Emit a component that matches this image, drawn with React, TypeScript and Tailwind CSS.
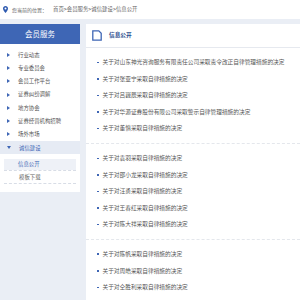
import { ReactNode } from "react";

const font = { fontFamily: '"Noto Sans CJK SC", "Noto Sans", sans-serif' };

const menu = ["行业动态", "专业委员会", "会员工作平台", "证券纠纷调解", "地方协会", "证券经营机构招聘", "场外市场"];

const groups = [
  [
    "关于对山东神光咨询服务有限责任公司采取责令改正自律管理措施的决定",
    "关于对张亚宁采取自律措施的决定",
    "关于对吕巍辰采取自律措施的决定",
    "关于对华源证券股份有限公司采取警示自律管理措施的决定",
    "关于对董慎采取自律措施的决定",
  ],
  [
    "关于对袁羽采取自律措施的决定",
    "关于对邵小龙采取自律措施的决定",
    "关于对汪勇采取自律措施的决定",
    "关于对王春红采取自律措施的决定",
    "关于对陈大祥采取自律措施的决定",
  ],
  ["关于对陈帆采取自律措施的决定", "关于对周皓采取自律措施的决定", "关于对仝胜利采取自律措施的决定"],
];

function Triangle({ down }: { down?: boolean }) {
  return down ? (
    <span className="h-0 w-0 border-x-[2px] border-t-[3px] border-x-transparent border-t-[#3e66b5]" />
  ) : (
    <span className="h-0 w-0 border-y-[2px] border-l-[3px] border-y-transparent border-l-[#3e66b5]" />
  );
}

function SideItem({ children, active }: { children: ReactNode; active?: boolean }) {
  return (
    <li
      className={`flex h-[13.3px] items-center gap-[6px] pl-[7px] text-[5.4px] ${
        active ? "bg-[#e6ebf4] text-[#3e66b5]" : "text-[#555]"
      }`}
    >
      <Triangle down={active} />
      <span className="ml-[2px]">{children}</span>
    </li>
  );
}

export default function App() {
  return (
    <div className="h-[300px] w-[300px] overflow-hidden bg-[#eaeef5]" style={font}>
      <div className="flex h-[19px] items-center gap-[4px] bg-white pl-[3px] text-[5px] text-[#666]">
        <svg width="5" height="7" viewBox="0 0 10 14">
          <path d="M5 0C2.2 0 0 2.2 0 5c0 3.6 5 9 5 9s5-5.4 5-9c0-2.8-2.2-5-5-5z" fill="#2f5bb0" />
          <circle cx="5" cy="5" r="2" fill="#fff" />
        </svg>
        <span>您当前的位置：</span>
        <span className="ml-[2px] text-[5.4px]">首页&gt;会员服务&gt;诚信建设&gt;信息公开</span>
      </div>

      <div className="flex gap-[6px] pt-[5px]">
        <div className="w-[80px] shrink-0 self-start bg-white pb-[8px]">
          <div className="flex h-[20px] items-center justify-center bg-[#3e66b5] text-[7.5px] text-white">会员服务</div>
          <ul className="pt-[4px]">
            {menu.map((m) => (
              <SideItem key={m}>{m}</SideItem>
            ))}
            <SideItem active>诚信建设</SideItem>
          </ul>
          <ul className="mx-[4px] mt-[4px] text-[5.4px]">
            <li className="flex h-[13px] items-center border-b border-dashed border-[#d8dde6] text-[#3e66b5]">
              <span className="flex h-[11px] w-full items-center bg-[#eef1f7] pl-[14px]">信息公开</span>
            </li>
            <li className="flex h-[13px] items-center border-b border-dashed border-[#d8dde6] pl-[15px] text-[#666]">
              模板下载
            </li>
          </ul>
        </div>

        <div className="min-h-[290px] flex-1 bg-white">
          <div className="flex h-[24px] items-center gap-[7px] border-b border-[#e6e9ef] pl-[6px]">
            <svg width="10" height="11" viewBox="0 0 10 11">
              <path d="M0.8 0.8H6.8L9.2 3.2V10.2H0.8Z" fill="none" stroke="#3e66b5" strokeWidth="1.3" />
            </svg>
            <span className="text-[5.7px] font-bold text-[#2c4d8f]">信息公开</span>
          </div>
          {groups.map((g, i) => (
            <ul
              key={i}
              className={`py-[6px] pl-[11px] ${i < groups.length - 1 ? "border-b border-dashed border-[#e4e7ec]" : ""}`}
            >
              {g.map((t) => (
                <li key={t} className="flex h-[16.6px] items-center gap-[4px] whitespace-nowrap text-[5.7px] text-[#555]">
                  <span className="h-[1.5px] w-[1.5px] shrink-0 bg-[#3e66b5]" />
                  <span>{t}</span>
                </li>
              ))}
            </ul>
          ))}
        </div>
      </div>
    </div>
  );
}
